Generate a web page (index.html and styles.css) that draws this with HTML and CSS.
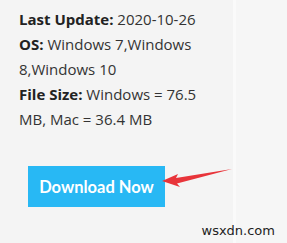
FILE: index.html
```html
<!DOCTYPE html>
<html lang="en">
<head>
    <meta charset="UTF-8">
    <meta name="viewport" content="width=device-width, initial-scale=1.0">
    <title>Download</title>
    <link rel="stylesheet" href="styles.css">
</head>
<body>
    <div class="page">
        <div class="content">
            <div class="info">
                <p class="line"><b>1.1.22</b></p>
                <p class="line"><b>Last Update:</b> 2020-10-26</p>
                <p class="line"><b>OS:</b> Windows 7,Windows 8,Windows 10</p>
                <p class="line"><b>File Size:</b> Windows = 76.5 MB, Mac = 36.4 MB</p>
            </div>

            <div class="download">
                <a class="downloadBtn" href="#">Download Now</a>
                <svg class="arrow" width="76" height="24" viewBox="0 0 76 24">
                    <path d="M2 15 L18 8 L16 12 L72 3 L17 17.5 L20 21 Z" fill="#e8343a"/>
                </svg>
            </div>
        </div>
        <div class="side"></div>
    </div>

    <span class="watermark">wsxdn.com</span>
</body>
</html>
```

FILE: styles.css
```css
body {
        margin: 0;
        height: 243px;
        background-color: #f4f4f4;
        overflow: hidden;
        position: relative;
}

.page {
        display: flex;
        height: 100%;
}

.content {
        width: 236px;
        padding-left: 19px;
        box-sizing: border-box;
        border-right: 3px solid #fafafa;
}

.side {
        flex: 1;
        background-color: #f6f6f6;
}

.info {
        margin-top: -18px;
        font-family: "Open Sans", sans-serif;
        font-size: 15px;
        line-height: 25px;
        color: #333333;
        width: 200px;
}

.line {
        margin: 0;
}

.line b {
        color: #222222;
        font-weight: 700;
}

.download {
        position: relative;
        margin-top: 34px;
        padding-left: 9px;
}

.downloadBtn {
        display: inline-flex;
        align-items: center;
        justify-content: center;
        width: 137px;
        height: 41px;
        background-color: #28b8f4;
        color: #ffffff;
        font-family: "Lato", sans-serif;
        font-weight: 700;
        font-size: 16.5px;
        text-decoration: none;
}

.arrow {
        position: absolute;
        left: 141px;
        top: 0;
}

.watermark {
        position: absolute;
        right: 12px;
        bottom: 5px;
        font-family: "DejaVu Sans", sans-serif;
        font-size: 13px;
        color: #222222;
}
```
